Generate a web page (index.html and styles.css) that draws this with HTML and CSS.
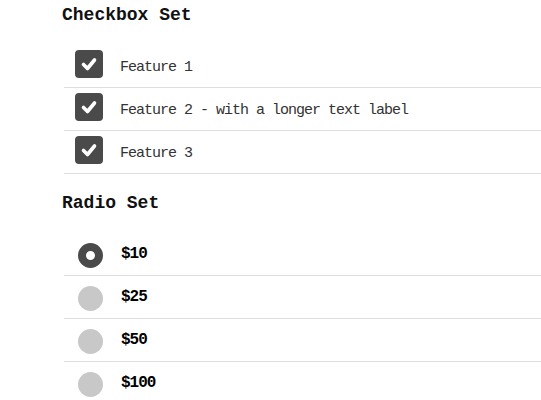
FILE: index.html
```html
<!DOCTYPE html>
<html>
<head>
<meta charset="utf-8">
<link rel="stylesheet" href="styles.css">
</head>
<body>
<div class="page">
  <h2 class="set-title">Checkbox Set</h2>
  <ul class="set">
    <li class="row">
      <span class="check"><svg viewBox="0 0 28 28" width="28" height="28"><path d="M8.5 14.5 L12.5 18.5 L19.5 10" fill="none" stroke="#fff" stroke-width="3.6" stroke-linecap="round" stroke-linejoin="round"/></svg></span>
      <span class="label">Feature 1</span>
    </li>
    <li class="row">
      <span class="check"><svg viewBox="0 0 28 28" width="28" height="28"><path d="M8.5 14.5 L12.5 18.5 L19.5 10" fill="none" stroke="#fff" stroke-width="3.6" stroke-linecap="round" stroke-linejoin="round"/></svg></span>
      <span class="label">Feature 2 - with a longer text label</span>
    </li>
    <li class="row">
      <span class="check"><svg viewBox="0 0 28 28" width="28" height="28"><path d="M8.5 14.5 L12.5 18.5 L19.5 10" fill="none" stroke="#fff" stroke-width="3.6" stroke-linecap="round" stroke-linejoin="round"/></svg></span>
      <span class="label">Feature 3</span>
    </li>
  </ul>
  <h2 class="set-title radio-title">Radio Set</h2>
  <ul class="set">
    <li class="row radio-row">
      <span class="radio on"></span>
      <span class="label price">$10</span>
    </li>
    <li class="row radio-row">
      <span class="radio"></span>
      <span class="label price">$25</span>
    </li>
    <li class="row radio-row">
      <span class="radio"></span>
      <span class="label price">$50</span>
    </li>
    <li class="row radio-row">
      <span class="radio"></span>
      <span class="label price">$100</span>
    </li>
  </ul>
</div>
</body>
</html>
```
FILE: styles.css
```css
html, body {
  margin: 0;
  padding: 0;
  background: #fff;
}
.page {
  padding: 4px 0 0 62px;
  font-family: "Liberation Mono", "DejaVu Sans Mono", monospace;
  color: #222;
}
.set-title {
  margin: 0;
  height: 22px;
  line-height: 22px;
  font-size: 18px;
  font-weight: bold;
  color: #111;
}
.radio-title {
  margin-top: 18px;
}
.set {
  list-style: none;
  margin: 19px 0 0 2px;
  padding: 0;
}
.row {
  display: flex;
  align-items: center;
  gap: 17px;
  height: 42px;
  padding-left: 11px;
  border-bottom: 1px solid #dedede;
}
.check {
  display: flex;
  width: 28px;
  height: 28px;
  margin-bottom: 4px;
  border-radius: 4px;
  background: #4a4a4a;
}
.label {
  padding-top: 3px;
  font-size: 15px;
  letter-spacing: -1px;
  color: #333;
}
.radio-row {
  gap: 18px;
}
.radio {
  box-sizing: border-box;
  width: 25px;
  height: 25px;
  margin: 2px 0 0 3px;
  border-radius: 50%;
  background: #c8c8c8;
}
.radio.on {
  background: #fff;
  border: 8px solid #4a4a4a;
}
.price {
  padding-top: 0;
  font-size: 16px;
  font-weight: bold;
  color: #000;
}
```
